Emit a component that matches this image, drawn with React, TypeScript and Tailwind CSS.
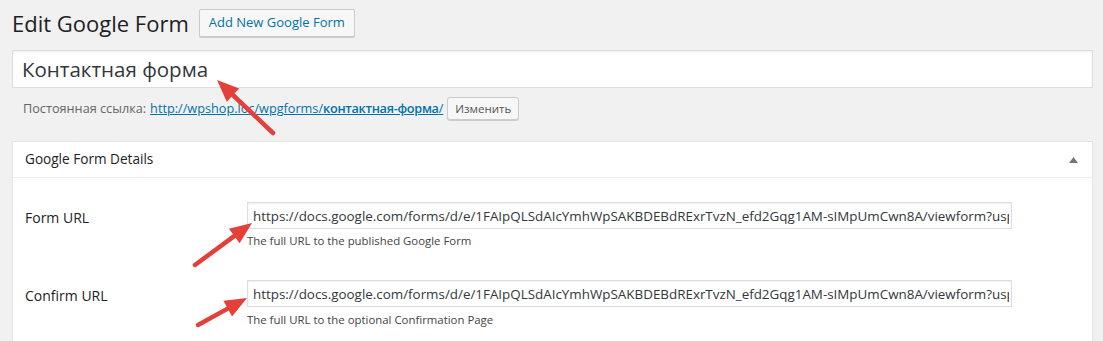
import React from "react";

const URL_VALUE =
  "https://docs.google.com/forms/d/e/1FAIpQLSdAIcYmhWpSAKBDEBdRExrTvzN_efd2Gqg1AM-sIMpUmCwn8A/viewform?usp=sf_link";

function Arrow({ x1, y1, x2, y2 }: { x1: number; y1: number; x2: number; y2: number }) {
  const dx = x2 - x1;
  const dy = y2 - y1;
  const len = Math.sqrt(dx * dx + dy * dy);
  const ux = dx / len;
  const uy = dy / len;
  const headLen = 22;
  const headW = 9;
  const bx = x2 - ux * headLen;
  const by = y2 - uy * headLen;
  const px = -uy;
  const py = ux;
  const pts = `${x2},${y2} ${bx + px * headW},${by + py * headW} ${bx - px * headW},${by - py * headW}`;
  return (
    <g>
      <line x1={x1} y1={y1} x2={bx + ux * 2} y2={by + uy * 2} stroke="#e53f3a" strokeWidth={4.5} strokeLinecap="round" />
      <polygon points={pts} fill="#e53f3a" />
    </g>
  );
}

function Row({ label, desc, mt, dmt }: { label: string; desc: string; mt: string; dmt: string }) {
  return (
    <div className={`flex ${mt}`}>
      <div className="w-[222px] shrink-0 pt-[6px] text-[14px] leading-[20px] text-[#1d2125]">{label}</div>
      <div className="flex flex-col">
        <input
          readOnly
          value={URL_VALUE}
          className="w-[765px] h-[27px] border border-[#ddd] bg-white pl-[5px] pr-[2px] text-[13.4px] text-[#32373c] outline-none font-['Open_Sans'] shadow-[inset_0_1px_2px_rgba(0,0,0,0.07)]"
        />
        <div className={`${dmt} text-[11.4px] leading-[14px] text-[#444]`}>{desc}</div>
      </div>
    </div>
  );
}

export default function App() {
  return (
    <div className="relative w-[1103px] h-[341px] overflow-hidden bg-[#f1f1f1] font-['Open_Sans',sans-serif] text-[#23282d]">
      <div className="pl-[12px] pr-[10px]">
        <div className="flex items-center gap-[10px] pt-[9px] h-[37px]">
          <h1 className="text-[22px] leading-[28px] font-normal text-[#1d2125]">Edit Google Form</h1>
          <button className="h-[28px] px-[9px] border border-[#ccc] bg-[#f7f7f7] rounded-[2px] text-[13px] text-[#0073aa] shadow-[0_1px_0_#ccc]">
            Add New Google Form
          </button>
        </div>

        <div className="mt-[13px] h-[38px] border border-[#ddd] bg-white flex items-center px-[9px] text-[20.5px] text-[#32373c] shadow-[inset_0_1px_2px_rgba(0,0,0,0.07)]">
          Контактная форма
        </div>

        <div className="mt-[9px] h-[23px] flex items-center pl-[11px] text-[12.7px] text-[#666]">
          <span>Постоянная ссылка:</span>
          <a className="ml-[4px] text-[#0073aa] underline">
            http://wpshop.loc/wpgforms/<span className="font-semibold tracking-[-0.3px]">контактная-форма</span>/
          </a>
          <button className="ml-[4px] h-[23px] px-[7px] border border-[#ccc] bg-[#f7f7f7] rounded-[3px] text-[11.5px] text-[#555] shadow-[0_1px_0_#ccc]">
            Изменить
          </button>
        </div>

        <div className="mt-[21px] border border-[#e5e5e5] bg-white shadow-[0_1px_1px_rgba(0,0,0,0.04)] h-[220px]">
          <div className="h-[36px] border-b border-[#eee] flex items-center justify-between pl-[12px] pr-[14px]">
            <span className="text-[13.6px] text-[#1d2125]">Google Form Details</span>
            <svg width="9" height="6" viewBox="0 0 9 6">
              <polygon points="4.5,0 9,6 0,6" fill="#72777c" />
            </svg>
          </div>
          <div className="pl-[12px] pt-[24px]">
            <Row label="Form URL" desc="The full URL to the published Google Form" mt="" dmt="mt-[5px]" />
            <Row label="Confirm URL" desc="The full URL to the optional Confirmation Page" mt="mt-[32px]" dmt="mt-[6px]" />
          </div>
        </div>
      </div>

      <svg className="absolute inset-0 pointer-events-none" width="1103" height="341">
        <Arrow x1={273} y1={133} x2={217} y2={80} />
        <Arrow x1={195} y1={265} x2={252} y2={223} />
        <Arrow x1={198} y1={325} x2={247} y2={298} />
      </svg>
    </div>
  );
}
